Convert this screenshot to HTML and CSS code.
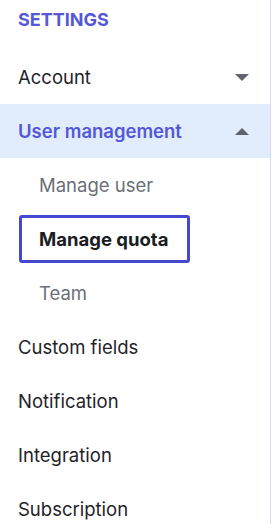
FILE: index.html
```html
<!DOCTYPE html>
<html lang="en">
<head>
  <meta charset="UTF-8">
  <meta name="viewport" content="width=device-width, initial-scale=1.0">
  <title>Settings</title>
  <link rel="stylesheet" href="styles.css">
</head>
<body>
  <nav class="sidebar">
    <div class="heading">SETTINGS</div>
    <div class="item">
      <span>Account</span>
      <span class="caret down"></span>
    </div>
    <div class="item open">
      <span>User management</span>
      <span class="caret up"></span>
    </div>
    <div class="sub">Manage user</div>
    <div class="sub">
      <span class="active">Manage quota</span>
    </div>
    <div class="sub">Team</div>
    <div class="item">Custom fields</div>
    <div class="item">Notification</div>
    <div class="item">Integration</div>
    <div class="item">Subscription</div>
  </nav>
</body>
</html>
```

FILE: styles.css
```css
body {
  margin: 0;
  font-family: Inter, "Noto Sans", sans-serif;
  background: white;
}
.sidebar {
  width: 270px;
  height: 524px;
  border-right: 1px solid #d5d9e0;
  overflow: hidden;
}
.heading {
  height: 50px;
  padding: 9px 18px 0;
  box-sizing: border-box;
  font-size: 18px;
  font-weight: 700;
  color: #5458d8;
}
.item {
  height: 54px;
  display: flex;
  align-items: center;
  justify-content: space-between;
  padding: 0 21px 0 18px;
  font-size: 18.5px;
  color: #1f2329;
}
.item.open {
  background: #e1edfc;
  color: #5458d8;
  font-weight: 600;
}
.caret {
  width: 0;
  height: 0;
  border-left: 7px solid transparent;
  border-right: 7px solid transparent;
}
.caret.down { border-top: 7px solid #5f636b; }
.caret.up { border-bottom: 7px solid #5f636b; }
.sub {
  height: 54px;
  display: flex;
  align-items: center;
  padding-left: 39px;
  font-size: 18.5px;
  color: #6b6f77;
}
.sub .active {
  margin-left: -20px;
  width: 171px;
  height: 48px;
  box-sizing: border-box;
  border: 3px solid #4549cf;
  border-radius: 3px;
  padding-left: 17px;
  display: flex;
  align-items: center;
  font-weight: 700;
  color: #1a1d22;
}
```
